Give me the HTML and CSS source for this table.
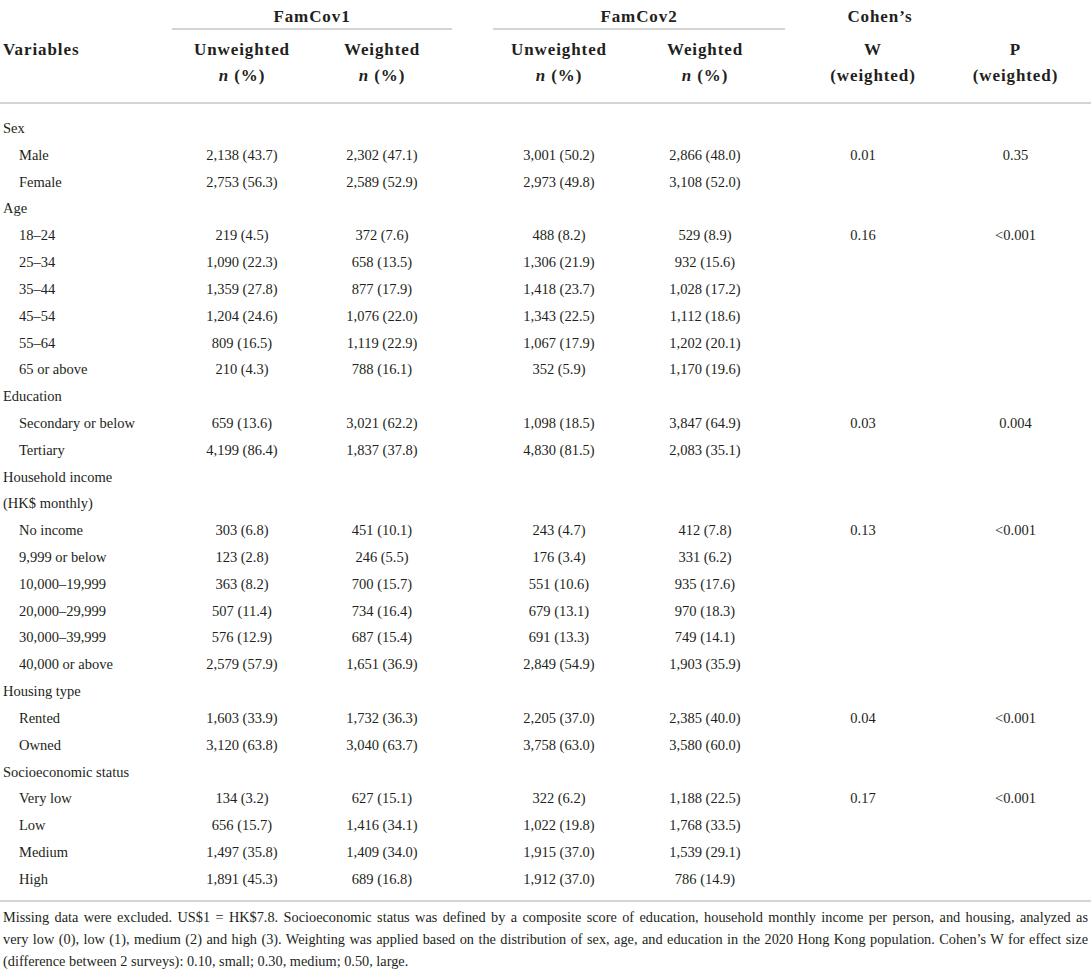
FILE: index.html
```html
<!DOCTYPE html>
<html lang="en">
<head>
<meta charset="utf-8">
<title>Table</title>
<link rel="stylesheet" href="styles.css">
</head>
<body>
<table class="tbl">
  <colgroup>
    <col class="c0"><col class="c1"><col class="c2"><col class="c3"><col class="c4"><col class="c5"><col class="c6">
  </colgroup>
  <thead>
    <tr class="hr1">
      <th></th>
      <th colspan="2" class="grp g1"><span class="grp-line">FamCov1</span></th>
      <th colspan="2" class="grp g2"><span class="grp-line">FamCov2</span></th>
      <th class="grp g3"><span class="grp-plain">Cohen’s</span></th>
      <th></th>
    </tr>
    <tr class="hr2">
      <th class="var">Variables</th>
      <th class="k1">Unweighted<br><i>n</i> (%)</th>
      <th class="k2">Weighted<br><i>n</i> (%)</th>
      <th class="k3">Unweighted<br><i>n</i> (%)</th>
      <th class="k4">Weighted<br><i>n</i> (%)</th>
      <th class="k5">W<br>(weighted)</th>
      <th class="k6">P<br>(weighted)</th>
    </tr>
  </thead>
  <tbody>
    <tr class="first"><td class="lab">Sex</td><td></td><td class="k2"></td><td class="k3"></td><td class="k4"></td><td></td><td></td></tr>
    <tr><td class="lab sub">Male</td><td class="k1">2,138 (43.7)</td><td class="k2">2,302 (47.1)</td><td class="k3">3,001 (50.2)</td><td class="k4">2,866 (48.0)</td><td class="k5">0.01</td><td class="k6">0.35</td></tr>
    <tr><td class="lab sub">Female</td><td class="k1">2,753 (56.3)</td><td class="k2">2,589 (52.9)</td><td class="k3">2,973 (49.8)</td><td class="k4">3,108 (52.0)</td><td class="k5"></td><td class="k6"></td></tr>
    <tr><td class="lab">Age</td><td></td><td class="k2"></td><td class="k3"></td><td class="k4"></td><td></td><td></td></tr>
    <tr><td class="lab sub">18–24</td><td class="k1">219 (4.5)</td><td class="k2">372 (7.6)</td><td class="k3">488 (8.2)</td><td class="k4">529 (8.9)</td><td class="k5">0.16</td><td class="k6">&lt;0.001</td></tr>
    <tr><td class="lab sub">25–34</td><td class="k1">1,090 (22.3)</td><td class="k2">658 (13.5)</td><td class="k3">1,306 (21.9)</td><td class="k4">932 (15.6)</td><td class="k5"></td><td class="k6"></td></tr>
    <tr><td class="lab sub">35–44</td><td class="k1">1,359 (27.8)</td><td class="k2">877 (17.9)</td><td class="k3">1,418 (23.7)</td><td class="k4">1,028 (17.2)</td><td class="k5"></td><td class="k6"></td></tr>
    <tr><td class="lab sub">45–54</td><td class="k1">1,204 (24.6)</td><td class="k2">1,076 (22.0)</td><td class="k3">1,343 (22.5)</td><td class="k4">1,112 (18.6)</td><td class="k5"></td><td class="k6"></td></tr>
    <tr><td class="lab sub">55–64</td><td class="k1">809 (16.5)</td><td class="k2">1,119 (22.9)</td><td class="k3">1,067 (17.9)</td><td class="k4">1,202 (20.1)</td><td class="k5"></td><td class="k6"></td></tr>
    <tr><td class="lab sub">65 or above</td><td class="k1">210 (4.3)</td><td class="k2">788 (16.1)</td><td class="k3">352 (5.9)</td><td class="k4">1,170 (19.6)</td><td class="k5"></td><td class="k6"></td></tr>
    <tr><td class="lab">Education</td><td></td><td class="k2"></td><td class="k3"></td><td class="k4"></td><td></td><td></td></tr>
    <tr><td class="lab sub">Secondary or below</td><td class="k1">659 (13.6)</td><td class="k2">3,021 (62.2)</td><td class="k3">1,098 (18.5)</td><td class="k4">3,847 (64.9)</td><td class="k5">0.03</td><td class="k6">0.004</td></tr>
    <tr><td class="lab sub">Tertiary</td><td class="k1">4,199 (86.4)</td><td class="k2">1,837 (37.8)</td><td class="k3">4,830 (81.5)</td><td class="k4">2,083 (35.1)</td><td class="k5"></td><td class="k6"></td></tr>
    <tr><td class="lab">Household income</td><td></td><td class="k2"></td><td class="k3"></td><td class="k4"></td><td></td><td></td></tr>
    <tr><td class="lab">(HK$ monthly)</td><td></td><td class="k2"></td><td class="k3"></td><td class="k4"></td><td></td><td></td></tr>
    <tr><td class="lab sub">No income</td><td class="k1">303 (6.8)</td><td class="k2">451 (10.1)</td><td class="k3">243 (4.7)</td><td class="k4">412 (7.8)</td><td class="k5">0.13</td><td class="k6">&lt;0.001</td></tr>
    <tr><td class="lab sub">9,999 or below</td><td class="k1">123 (2.8)</td><td class="k2">246 (5.5)</td><td class="k3">176 (3.4)</td><td class="k4">331 (6.2)</td><td class="k5"></td><td class="k6"></td></tr>
    <tr><td class="lab sub">10,000–19,999</td><td class="k1">363 (8.2)</td><td class="k2">700 (15.7)</td><td class="k3">551 (10.6)</td><td class="k4">935 (17.6)</td><td class="k5"></td><td class="k6"></td></tr>
    <tr><td class="lab sub">20,000–29,999</td><td class="k1">507 (11.4)</td><td class="k2">734 (16.4)</td><td class="k3">679 (13.1)</td><td class="k4">970 (18.3)</td><td class="k5"></td><td class="k6"></td></tr>
    <tr><td class="lab sub">30,000–39,999</td><td class="k1">576 (12.9)</td><td class="k2">687 (15.4)</td><td class="k3">691 (13.3)</td><td class="k4">749 (14.1)</td><td class="k5"></td><td class="k6"></td></tr>
    <tr><td class="lab sub">40,000 or above</td><td class="k1">2,579 (57.9)</td><td class="k2">1,651 (36.9)</td><td class="k3">2,849 (54.9)</td><td class="k4">1,903 (35.9)</td><td class="k5"></td><td class="k6"></td></tr>
    <tr><td class="lab">Housing type</td><td></td><td class="k2"></td><td class="k3"></td><td class="k4"></td><td></td><td></td></tr>
    <tr><td class="lab sub">Rented</td><td class="k1">1,603 (33.9)</td><td class="k2">1,732 (36.3)</td><td class="k3">2,205 (37.0)</td><td class="k4">2,385 (40.0)</td><td class="k5">0.04</td><td class="k6">&lt;0.001</td></tr>
    <tr><td class="lab sub">Owned</td><td class="k1">3,120 (63.8)</td><td class="k2">3,040 (63.7)</td><td class="k3">3,758 (63.0)</td><td class="k4">3,580 (60.0)</td><td class="k5"></td><td class="k6"></td></tr>
    <tr><td class="lab">Socioeconomic status</td><td></td><td class="k2"></td><td class="k3"></td><td class="k4"></td><td></td><td></td></tr>
    <tr><td class="lab sub">Very low</td><td class="k1">134 (3.2)</td><td class="k2">627 (15.1)</td><td class="k3">322 (6.2)</td><td class="k4">1,188 (22.5)</td><td class="k5">0.17</td><td class="k6">&lt;0.001</td></tr>
    <tr><td class="lab sub">Low</td><td class="k1">656 (15.7)</td><td class="k2">1,416 (34.1)</td><td class="k3">1,022 (19.8)</td><td class="k4">1,768 (33.5)</td><td class="k5"></td><td class="k6"></td></tr>
    <tr><td class="lab sub">Medium</td><td class="k1">1,497 (35.8)</td><td class="k2">1,409 (34.0)</td><td class="k3">1,915 (37.0)</td><td class="k4">1,539 (29.1)</td><td class="k5"></td><td class="k6"></td></tr>
    <tr class="last"><td class="lab sub">High</td><td class="k1">1,891 (45.3)</td><td class="k2">689 (16.8)</td><td class="k3">1,912 (37.0)</td><td class="k4">786 (14.9)</td><td class="k5"></td><td class="k6"></td></tr>
  </tbody>
</table>
<div class="note">
  <span class="nl just">Missing data were excluded. US$1 = HK$7.8. Socioeconomic status was defined by a composite score of education, household monthly income per person, and housing, analyzed as</span>
  <span class="nl just">very low (0), low (1), medium (2) and high (3). Weighting was applied based on the distribution of sex, age, and education in the 2020 Hong Kong population. Cohen’s W for effect size</span>
  <span class="nl">(difference between 2 surveys): 0.10, small; 0.30, medium; 0.50, large.</span>
</div>
</body>
</html>
```
FILE: styles.css
```css
html, body {
  margin: 0;
  padding: 0;
  background: #ffffff;
}
body {
  font-family: "Liberation Serif", "Times New Roman", serif;
  color: #231f20;
  width: 1091px;
}
.tbl {
  width: 1091px;
  border-collapse: collapse;
  table-layout: fixed;
}
.c0 { width: 172px; }
.c1 { width: 140px; }
.c2 { width: 160px; }
.c3 { width: 153px; }
.c4 { width: 181px; }
.c5 { width: 134px; }
.c6 { width: 151px; }

thead th {
  font-weight: 700;
  font-size: 17px;
  letter-spacing: 0.9px;
  padding: 0;
  text-align: center;
  vertical-align: top;
}
thead th i {
  font-style: italic;
}
.hr1 th {
  height: 30px;
}
.grp-line {
  display: block;
  line-height: 22px;
  padding-top: 6px;
  padding-bottom: 0;
  border-bottom: 2px solid #d4d4d4;
}
.grp-plain {
  display: block;
  line-height: 22px;
  padding-top: 6px;
  padding-left: 14px;
}
.g1 { padding-right: 20px; }
.g2 { padding-left: 21px; padding-right: 21px; }
.hr2 th {
  line-height: 26px;
  padding-top: 7px;
  padding-bottom: 13px;
  border-bottom: 2px solid #d4d4d4;
}
.hr2 th.var {
  text-align: left;
  padding-left: 3px;
}
.k2 { padding-right: 20px !important; }
.k3 { padding-left: 21px !important; }
.k4 { padding-right: 21px !important; }
.hr2 .k5 { padding-left: 0; }

tbody td {
  font-size: 14.5px;
  line-height: 20px;
  padding: 3.42px 0;
  text-align: center;
  white-space: nowrap;
}
tbody td.lab {
  text-align: left;
  padding-left: 3px;
  font-size: 14.5px;
}
tbody td.sub {
  padding-left: 19px;
}
tbody tr.first td {
  padding-top: 14px;
}
tbody tr.last td {
  padding-bottom: 11px;
}
tbody td.k5 {
  padding-right: 20px;
}
.note {
  border-top: 2px solid #d4d4d4;
  padding: 4px 3px 0 3px;
  font-size: 14.3px;
  line-height: 22px;
}
.nl {
  display: block;
  white-space: nowrap;
}
.nl.just {
  white-space: normal;
  text-align: justify;
  text-align-last: justify;
}
```
